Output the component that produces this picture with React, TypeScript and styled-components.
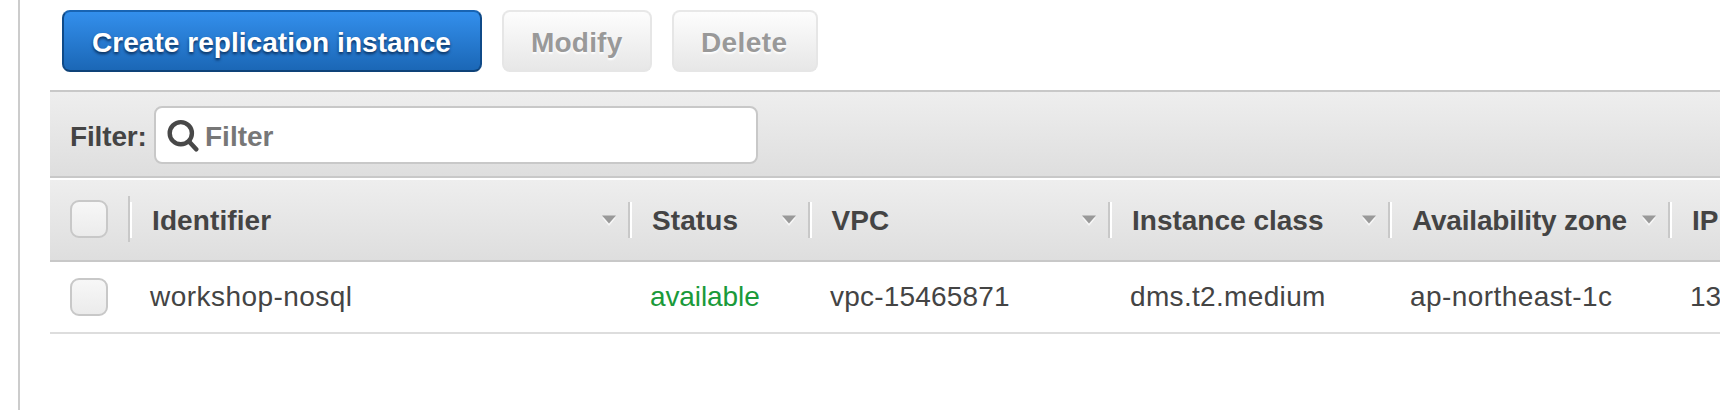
import React from 'react';
import styled, { createGlobalStyle } from 'styled-components';

const GlobalStyle = createGlobalStyle`
  * { box-sizing: border-box; }
  html, body { margin: 0; background: #fff; }
  body {
    overflow: hidden;
    font-family: "Liberation Sans", Arial, sans-serif;
    font-size: 28px;
    line-height: 32px;
    color: #444;
  }
`;

const Page = styled.div`
  width: 1720px;
  height: 410px;
  padding-left: 18px;
  overflow: hidden;
`;

const Panel = styled.main`
  height: 100%;
  padding: 10px 0 0 30px;
  border-left: 2px solid #ccc;
`;

const Toolbar = styled.div`
  display: flex;
  gap: 20px;
  height: 80px;
  padding-left: 12px;
`;

const Button = styled.button<{ $width: number; $tracking: number; $primary?: boolean }>`
  width: ${(p) => p.$width}px;
  height: 62px;
  padding: 4px 0 0 ${(p) => (p.$primary ? 28 : 27)}px;
  border: 2px solid ${(p) => (p.$primary ? '#0f4a88' : '#e6e6e6')};
  border-top-color: ${(p) => (p.$primary ? '#1864b3' : '#e8e8e8')};
  border-bottom-color: ${(p) => (p.$primary ? '#0e4278' : '#e6e6e6')};
  border-radius: 8px;
  background: ${(p) =>
    p.$primary ? 'linear-gradient(#338fec, #1b67b6)' : 'linear-gradient(#fdfdfd, #e7e7e7)'};
  color: ${(p) => (p.$primary ? '#fff' : '#999')};
  font: bold 28px/32px "Liberation Sans", Arial, sans-serif;
  letter-spacing: ${(p) => p.$tracking}px;
  text-align: left;
  white-space: nowrap;
  text-shadow: ${(p) => (p.$primary ? '0 2px 3px rgba(0, 20, 50, 0.75)' : '0 2px 2px #fff')};
`;

const FilterBar = styled.div`
  display: flex;
  align-items: center;
  height: 88px;
  padding-left: 20px;
  border-top: 2px solid #c8c8c8;
  border-bottom: 2px solid #c8c8c8;
  background: linear-gradient(#eee, #dedede);
`;

const FilterLabel = styled.label`
  width: 84px;
  padding-top: 6px;
  font-weight: bold;
  letter-spacing: -0.15px;
`;

const SearchBox = styled.div`
  display: flex;
  align-items: center;
  width: 604px;
  height: 58px;
  margin-top: 2px;
  padding-left: 10px;
  border: 2px solid #c8c8c8;
  border-radius: 8px;
  background: #fff;

  svg { flex: none; }
`;

const SearchInput = styled.input`
  flex: 1;
  min-width: 0;
  height: 40px;
  margin-left: 5px;
  padding: 4px 0 0;
  border: 0;
  outline: 0;
  background: transparent;
  font: bold 28px/32px "Liberation Sans", Arial, sans-serif;

  &::placeholder { color: #777; opacity: 1; }
`;

const Table = styled.div`
  padding-top: 2px;
`;

const Row = styled.div<{ $header?: boolean }>`
  display: grid;
  grid-template-columns: 78px 500px 180px 300px 280px 280px 200px;
  align-items: center;
  height: ${(p) => (p.$header ? 82 : 72)}px;
  border-bottom: 2px solid ${(p) => (p.$header ? '#c8c8c8' : '#ddd')};
  background: ${(p) => (p.$header ? 'linear-gradient(#eee, #dedede)' : '#fff')};
`;

const CheckCell = styled.div<{ $offset: number }>`
  padding: 0 0 ${(p) => p.$offset}px 20px;
`;

const Checkbox = styled.span`
  display: block;
  width: 38px;
  height: 38px;
  border: 2px solid #c8c8c8;
  border-radius: 9px;
  background: linear-gradient(#f7f7f7, #ebebeb);
`;

const HeaderCell = styled.div<{ $tracking: number; $first?: boolean }>`
  display: flex;
  align-items: center;
  justify-content: space-between;
  height: ${(p) => (p.$first ? 46 : 36)}px;
  margin-bottom: ${(p) => (p.$first ? 2 : 0)}px;
  padding-right: 11px;
  border-left: 2px solid #c8c8c8;
  font-weight: bold;
  letter-spacing: ${(p) => p.$tracking}px;
  white-space: nowrap;

  &::before {
    content: '';
    width: 2px;
    height: 36px;
    margin: ${(p) => (p.$first ? '2px' : '0')} 19px 0 0;
    background: #fff;
  }

  svg { margin-top: ${(p) => (p.$first ? '2px' : '0')}; }
`;

const HeaderText = styled.span<{ $nudge: number; $first?: boolean }>`
  flex: 1;
  padding: ${(p) => (p.$first ? 4 : 2)}px 0 0 ${(p) => p.$nudge}px;
`;

const Cell = styled.div<{ $tracking: number; $good?: boolean }>`
  padding-left: 22px;
  color: ${(p) => (p.$good ? '#1a9a3a' : '#444')};
  letter-spacing: ${(p) => p.$tracking}px;
  white-space: nowrap;
`;

const SearchIcon = () => (
  <svg width="34" height="34" viewBox="0 0 34 34" fill="none" stroke="#484848">
    <circle cx="14.8" cy="15.2" r="11.1" strokeWidth="4.4" />
    <path d="M23 23.5L30.2 31.2" strokeWidth="4.6" strokeLinecap="round" />
  </svg>
);

const SortArrow = () => (
  <svg width="16" height="12" viewBox="0 0 16 12">
    <path d="M1 3.4H15L8 12Z" fill="#f7f7f7" />
    <path d="M1 1.4H15L8 9.4Z" fill="#999" />
  </svg>
);

const columns = [
  { title: 'Identifier', tracking: 0.1, nudge: 1, value: 'workshop-nosql', cellTracking: 0.46 },
  { title: 'Status', tracking: 0.1, nudge: 1, value: 'available', cellTracking: -0.1, good: true },
  { title: 'VPC', tracking: 0, nudge: 0.6, value: 'vpc-15465871', cellTracking: 0.2 },
  { title: 'Instance class', tracking: 0, nudge: 1, value: 'dms.t2.medium', cellTracking: 0.33 },
  { title: 'Availability zone', tracking: -0.2, nudge: 1, value: 'ap-northeast-1c', cellTracking: 0.42 },
  { title: 'IP', tracking: 0, nudge: 1, value: '13', cellTracking: 0 },
];

export default function App() {
  return (
    <Page>
      <GlobalStyle />
      <Panel>
        <Toolbar>
          <Button $primary $width={420} $tracking={0.04}>Create replication instance</Button>
          <Button $width={150} $tracking={0.2}>Modify</Button>
          <Button $width={146} $tracking={0.4}>Delete</Button>
        </Toolbar>
        <FilterBar>
          <FilterLabel htmlFor="filter">Filter:</FilterLabel>
          <SearchBox>
            <SearchIcon />
            <SearchInput id="filter" placeholder="Filter" />
          </SearchBox>
        </FilterBar>
        <Table>
          <Row $header>
            <CheckCell $offset={2}><Checkbox /></CheckCell>
            {columns.map((c, i) => (
              <HeaderCell key={c.title} $tracking={c.tracking} $first={i === 0}>
                <HeaderText $nudge={c.nudge} $first={i === 0}>{c.title}</HeaderText>
                <SortArrow />
              </HeaderCell>
            ))}
          </Row>
          <Row>
            <CheckCell $offset={0}><Checkbox /></CheckCell>
            {columns.map((c) => (
              <Cell key={c.title} $tracking={c.cellTracking} $good={c.good}>{c.value}</Cell>
            ))}
          </Row>
        </Table>
      </Panel>
    </Page>
  );
}
